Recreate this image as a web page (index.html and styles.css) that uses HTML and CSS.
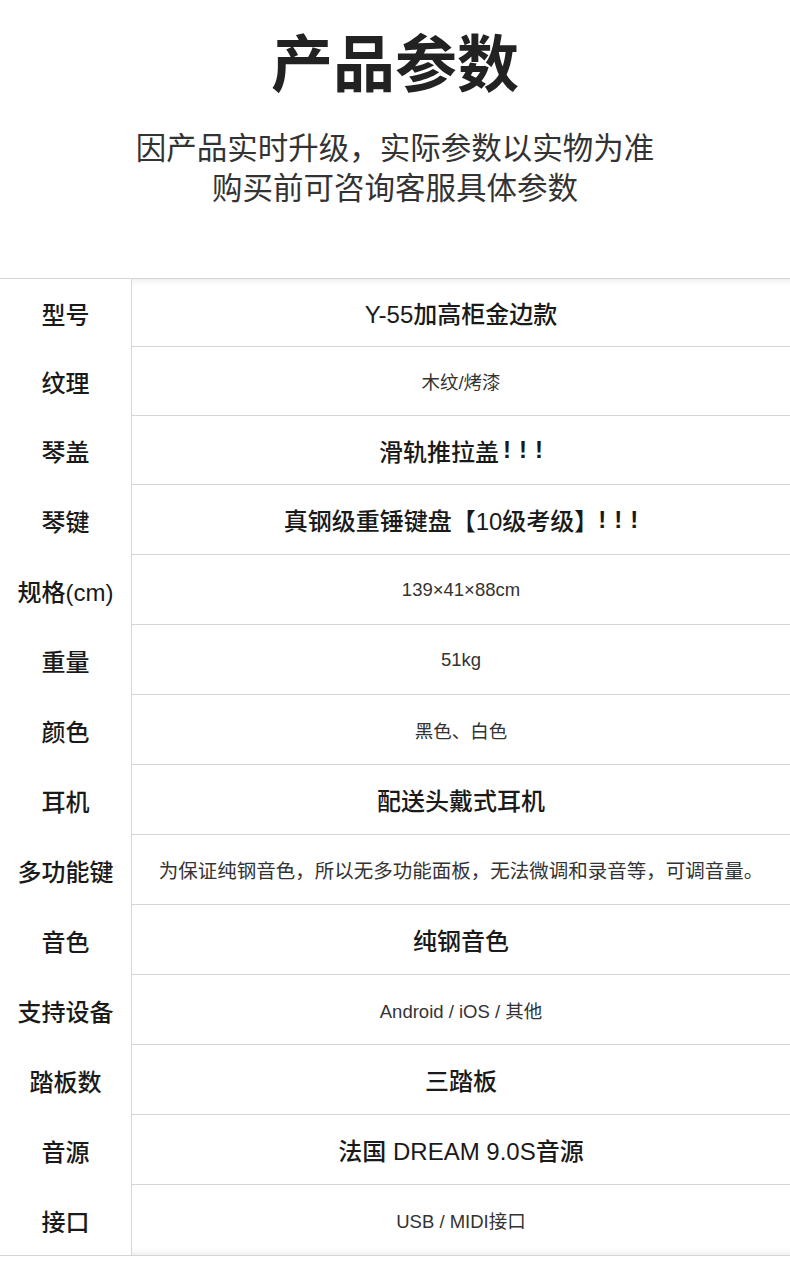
FILE: index.html
```html
<!DOCTYPE html>
<html lang="zh-CN">
<head>
    <meta charset="UTF-8">
    <meta name="viewport" content="width=device-width, initial-scale=1.0">
    <title>产品参数</title>
    <link rel="stylesheet" href="styles.css">
</head>
<body>

<div class="header">
    <h1>产品参数</h1>
    <p>因产品实时升级，实际参数以实物为准<br>购买前可咨询客服具体参数</p>
</div>

<div class="specs">
    <div class="row first">
        <div class="label">型号</div>
        <div class="value big">Y-55加高柜金边款</div>
    </div>
    <div class="row short">
        <div class="label">纹理</div>
        <div class="value">木纹/烤漆</div>
    </div>
    <div class="row short">
        <div class="label">琴盖</div>
        <div class="value big">滑轨推拉盖<span class="bang">!!!</span></div>
    </div>
    <div class="row">
        <div class="label">琴键</div>
        <div class="value big">真钢级重锤键盘【10级考级】<span class="bang tight">!!!</span></div>
    </div>
    <div class="row">
        <div class="label">规格(cm)</div>
        <div class="value">139×41×88cm</div>
    </div>
    <div class="row">
        <div class="label">重量</div>
        <div class="value">51kg</div>
    </div>
    <div class="row">
        <div class="label">颜色</div>
        <div class="value">黑色、白色</div>
    </div>
    <div class="row">
        <div class="label">耳机</div>
        <div class="value big">配送头戴式耳机</div>
    </div>
    <div class="row">
        <div class="label">多功能键</div>
        <div class="value long">为保证纯钢音色，所以无多功能面板，无法微调和录音等，可调音量。</div>
    </div>
    <div class="row">
        <div class="label">音色</div>
        <div class="value big">纯钢音色</div>
    </div>
    <div class="row">
        <div class="label">支持设备</div>
        <div class="value">Android / iOS / 其他</div>
    </div>
    <div class="row">
        <div class="label">踏板数</div>
        <div class="value big">三踏板</div>
    </div>
    <div class="row">
        <div class="label">音源</div>
        <div class="value big">法国 DREAM 9.0S音源</div>
    </div>
    <div class="row last">
        <div class="label">接口</div>
        <div class="value">USB / MIDI接口</div>
    </div>
</div>

</body>
</html>
```

FILE: styles.css
```css
body {
    margin: 0;
    background: #fff;
    color: #222;
    font-family: "Liberation Sans", "Noto Sans CJK SC", sans-serif;
}
.header {
    text-align: center;
    padding-top: 29px;
    padding-bottom: 70px;
}
.header h1 {
    margin: 0;
    font-size: 62px;
    line-height: 74px;
    font-weight: 700;
    color: #222;
}
.header p {
    margin: 25px 0 0;
    font-size: 30.5px;
    line-height: 40px;
    color: #333;
}
.specs {
    border-top: 1px solid #d6d6d6;
    border-bottom: 1px solid #d6d6d6;
}
.row {
    display: grid;
    grid-template-columns: 132px 1fr;
    height: 70px;
}
.row.first { height: 68px; }
.row.short { height: 69px; }
.label {
    display: flex;
    align-items: center;
    justify-content: center;
    border-right: 1px solid #d6d6d6;
    font-size: 24px;
    font-weight: 500;
    color: #1a1a1a;
    white-space: nowrap;
}
.value {
    display: flex;
    align-items: center;
    justify-content: center;
    border-bottom: 1px solid #d6d6d6;
    font-size: 18.5px;
    color: #333;
    white-space: nowrap;
}
.value.big {
    font-size: 24px;
    font-weight: 500;
    color: #1a1a1a;
}
.value.long { font-size: 19.5px; }
.bang {
    font-weight: 700;
    letter-spacing: 8px;
    margin-left: 4px;
    margin-right: -8px;
}
.bang.tight { margin-left: 0; }
.row.first .value {
    box-shadow: inset 0 8px 8px -8px rgba(0, 0, 0, 0.12);
}
.row.last .value {
    border-bottom: none;
    box-shadow: inset 0 -8px 8px -8px rgba(0, 0, 0, 0.12);
}
```
